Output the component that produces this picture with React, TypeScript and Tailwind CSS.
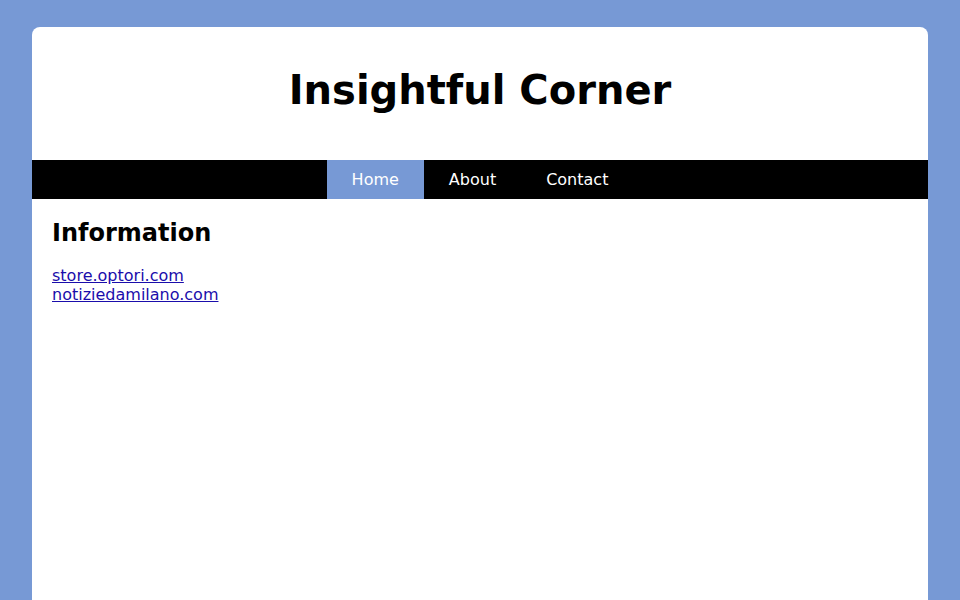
export default function App() {
  return (
    <div className="min-h-screen bg-[#7799d5] px-8 pt-[27px] font-['DejaVu_Sans',sans-serif]">
      <div className="bg-white rounded-t-lg min-h-[573px]">
        <header className="pt-10 pb-[46px] text-center">
          <h1 className="text-[40px] leading-[47px] font-bold text-black">Insightful Corner</h1>
        </header>
        <nav className="bg-black flex justify-center">
          <a href="#" className="px-[25px] py-[10px] text-base leading-[19px] text-white bg-[#7799d5]">Home</a>
          <a href="#" className="px-[25px] py-[10px] text-base leading-[19px] text-white">About</a>
          <a href="#" className="px-[25px] py-[10px] text-base leading-[19px] text-white">Contact</a>
        </nav>
        <main className="px-5 pt-5">
          <h2 className="text-2xl leading-7 font-bold text-black mb-[19px]">Information</h2>
          <div className="flex flex-col items-start text-base leading-[19px]">
            <a href="#" className="text-[#1a0dab] underline">store.optori.com</a>
            <a href="#" className="text-[#1a0dab] underline">notiziedamilano.com</a>
          </div>
        </main>
      </div>
    </div>
  );
}
